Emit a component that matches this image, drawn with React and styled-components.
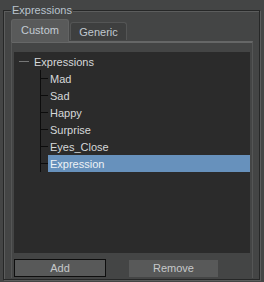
import React from 'react'
import styled, { createGlobalStyle } from 'styled-components'

const GlobalStyle = createGlobalStyle`
  html, body {
    margin: 0;
    padding: 0;
    background: #444545;
  }
  body {
    font-family: "Liberation Sans", Arial, sans-serif;
    font-size: 11px;
  }
`

const Page = styled.div`
  width: 264px;
  height: 282px;
  box-sizing: border-box;
  padding: 10px 4px 2px 3px;
  background: #444545;
`

const GroupBox = styled.div`
  position: relative;
  height: 100%;
  box-sizing: border-box;
  border: 1px solid #262727;
  box-shadow: inset 1px 1px 0 #5c5d5d, 1px 1px 0 #5c5d5d;
  padding: 8px 6px 1px 7px;
  display: flex;
  flex-direction: column;
`

const GroupTitle = styled.span`
  position: absolute;
  top: -7px;
  left: 7px;
  padding: 0 1px;
  background: #444545;
  color: #b9c3cd;
  line-height: 13px;
`

const TabBar = styled.div`
  display: flex;
  align-items: flex-end;
  height: 22px;
  position: relative;
  z-index: 1;
`

const Tab = styled.div`
  width: ${({ active }) => (active ? '58px' : '57px')};
  height: ${({ active }) => (active ? '23px' : '18px')};
  margin-right: 1px;
  box-sizing: border-box;
  display: flex;
  align-items: center;
  justify-content: center;
  padding-bottom: ${({ active }) => (active ? '3px' : '0')};
  background: ${({ active }) => (active ? '#595a5a' : '#3e3f3f')};
  border: 1px solid ${({ active }) => (active ? '#626363' : '#545555')};
  border-bottom: none;
  border-radius: 3px 3px 0 0;
  color: ${({ active }) => (active ? '#c3cbd3' : '#c0c8d0')};
  margin-bottom: ${({ active }) => (active ? '-1px' : '1px')};
`

const Panel = styled.div`
  flex: 1;
  display: flex;
  flex-direction: column;
  border-top: 2px solid #666767;
  border-left: 1px solid #555656;
  border-right: 1px solid #555656;
  padding: 9px 2px 0 2px;
`

const Tree = styled.div`
  height: 201px;
  background: #2b2b2b;
  padding-top: 1px;
  box-sizing: border-box;
`

const RootRow = styled.div`
  display: flex;
  align-items: center;
  height: 17px;
  padding-left: 5px;
  color: #d6d8da;
`

const Dash = styled.span`
  width: 10px;
  height: 1px;
  background: #767777;
  margin-right: 5px;
`

const ChildRow = styled.div`
  display: flex;
  height: 17px;
  padding-left: 26px;
`

const Connector = styled.span`
  width: 8px;
  flex: none;
  border-left: 1px solid #0c0c0c;
  box-sizing: border-box;
  background: linear-gradient(#0c0c0c, #0c0c0c) no-repeat 0 8px / 100% 1px;
`

const Label = styled.span`
  flex: 1;
  display: flex;
  align-items: center;
  padding-left: 2px;
  background: ${({ selected }) => (selected ? '#6791bc' : 'transparent')};
  color: ${({ selected }) => (selected ? '#eef2f6' : '#d6d8da')};
`

const ButtonRow = styled.div`
  display: flex;
  align-items: center;
  gap: 23px;
  margin-top: 6px;
`

const Button = styled.div`
  width: ${({ w }) => w}px;
  height: ${({ bordered }) => (bordered ? '18px' : '17px')};
  box-sizing: border-box;
  display: flex;
  align-items: center;
  justify-content: center;
  background: #585959;
  border: ${({ bordered }) => (bordered ? '1px solid #0e0e0e' : 'none')};
  color: #c6c8ca;
`

const items = ['Mad', 'Sad', 'Happy', 'Surprise', 'Eyes_Close', 'Expression']

export default function App() {
  return (
    <>
      <GlobalStyle />
      <Page>
        <GroupBox>
          <GroupTitle>Expressions</GroupTitle>
          <TabBar>
            <Tab active>Custom</Tab>
            <Tab>Generic</Tab>
          </TabBar>
          <Panel>
            <Tree>
              <RootRow>
                <Dash />
                Expressions
              </RootRow>
              {items.map((name) => (
                <ChildRow key={name}>
                  <Connector />
                  <Label selected={name === 'Expression'}>{name}</Label>
                </ChildRow>
              ))}
            </Tree>
            <ButtonRow>
              <Button w={92} bordered>Add</Button>
              <Button w={89}>Remove</Button>
            </ButtonRow>
          </Panel>
        </GroupBox>
      </Page>
    </>
  )
}
